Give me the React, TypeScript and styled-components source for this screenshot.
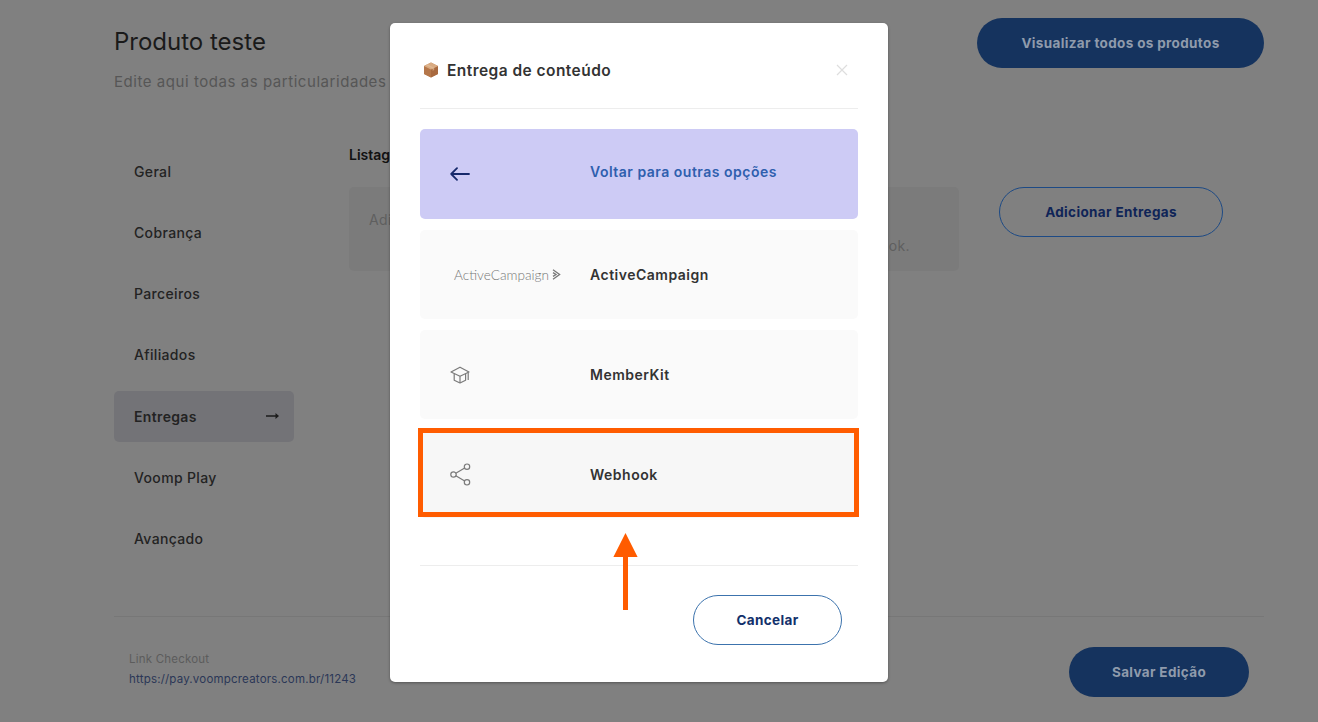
import React from "react";
import styled, { createGlobalStyle } from "styled-components";

const Global = createGlobalStyle`
  html, body { margin: 0; padding: 0; height: 100%; }
  body { font-family: Inter, "Liberation Sans", sans-serif; background: #808080; overflow: hidden; }
  * { box-sizing: border-box; }
`;

const Page = styled.div`
  position: relative;
  width: 1318px;
  height: 722px;
  overflow: hidden;
  background: #808080;
  padding: 18px 54px 0 114px;
`;

const Header = styled.header`
  display: flex;
  justify-content: space-between;
  align-items: flex-start;
  height: 128px;
`;

const TitleBlock = styled.div`
  display: flex;
  flex-direction: column;
  padding-top: 9px;
`;

const Title = styled.h1`
  margin: 0;
  font-size: 24px;
  line-height: 30px;
  font-weight: 400;
  color: #1a1a1a;
`;

const Subtitle = styled.p`
  margin: 15px 0 0;
  font-size: 15px;
  line-height: 20px;
  letter-spacing: 0.55px;
  color: #565656;
  white-space: nowrap;
`;

const SolidButton = styled.button<{ $w: number }>`
  width: ${(p) => p.$w}px;
  height: 50px;
  border: 0;
  border-radius: 25px;
  background: #15335e;
  color: #8f9bac;
  font: 700 13.5px Inter, sans-serif;
  letter-spacing: 0.35px;
`;

const OutlineButton = styled.button<{ $w: number; $color: string; $line: string; $bg: string }>`
  width: ${(p) => p.$w}px;
  height: 50px;
  flex: none;
  border: 1px solid ${(p) => p.$line};
  border-radius: 25px;
  background: ${(p) => p.$bg};
  color: ${(p) => p.$color};
  font: 700 13.5px Inter, sans-serif;
  letter-spacing: 0.35px;
`;

const Content = styled.div`
  display: flex;
  height: 470px;
`;

const Nav = styled.nav`
  width: 180px;
  flex: none;
  display: flex;
  flex-direction: column;
  gap: 10.17px;
`;

const NavItem = styled.div<{ $active?: boolean }>`
  height: 51px;
  display: flex;
  align-items: center;
  justify-content: space-between;
  padding: 0 15px 0 20px;
  border-radius: 5px;
  background: ${(p) => (p.$active ? "#737377" : "transparent")};
  color: #232323;
  font-size: 14px;
  font-weight: ${(p) => (p.$active ? 600 : 500)};
  letter-spacing: 0.35px;
`;

const Main = styled.section`
  margin-left: 55px;
  width: 610px;
  flex: none;
`;

const SectionTitle = styled.h2`
  margin: 0;
  padding-top: 0;
  font-size: 14px;
  line-height: 18px;
  font-weight: 600;
  color: #111;
  white-space: nowrap;
`;

const InfoBox = styled.div`
  margin-top: 23px;
  height: 84px;
  background: #7b7b7b;
  border-radius: 5px;
  padding: 20px 20px;
  font-size: 14px;
  line-height: 26px;
  letter-spacing: 0.4px;
  color: #5f5f5f;
`;

const InfoLine = styled.div<{ $right?: boolean }>`
  text-align: ${(p) => (p.$right ? "right" : "left")};
  padding-right: ${(p) => (p.$right ? "29px" : "0")};
  white-space: nowrap;
`;

const Aside = styled.div`
  margin-left: 40px;
  padding-top: 40.5px;
`;

const Footer = styled.footer`
  border-top: 1px solid #777;
  display: flex;
  justify-content: space-between;
  padding: 30px 15px 0;
`;

const CheckoutInfo = styled.div`
  padding-top: 2px;
  font-size: 11.5px;
  line-height: 20px;
  letter-spacing: 0.2px;
`;

const CheckoutLabel = styled.div`
  color: #5c5c5c;
`;

const CheckoutLink = styled.div`
  color: #2b3757;
`;

const Modal = styled.div`
  position: absolute;
  left: 390px;
  top: 23px;
  width: 498px;
  height: 659px;
  background: #fff;
  border-radius: 5px;
  padding: 0 30px;
  box-shadow: 0 1px 3px rgba(0, 0, 0, 0.35);
`;

const ModalHeader = styled.div`
  height: 86px;
  display: flex;
  align-items: center;
  justify-content: space-between;
  padding: 9px 10px 0 3px;
  border-bottom: 1px solid #ededed;
`;

const ModalTitle = styled.div`
  display: flex;
  align-items: center;
  gap: 8px;
  font-size: 15.5px;
  font-weight: 600;
  letter-spacing: 0.45px;
  color: #333;
`;

const Options = styled.div`
  display: flex;
  flex-direction: column;
  gap: 11px;
  padding-top: 20px;
  height: 457px;
  border-bottom: 1px solid #ededed;
`;

const Option = styled.div<{ $bg: string; $h: number }>`
  height: ${(p) => p.$h}px;
  display: flex;
  align-items: center;
  background: ${(p) => p.$bg};
  border-radius: 5px;
`;

const OptionIcon = styled.div`
  width: 170px;
  flex: none;
  display: flex;
  align-items: center;
  padding-left: 30px;
`;

const LogoText = styled.span`
  font-family: Lato, sans-serif;
  font-weight: 300;
  font-size: 13.6px;
  margin-left: 4px;
  color: #777;
  white-space: nowrap;
`;

const LogoWrap = styled.div`
  display: flex;
  align-items: center;
  gap: 3px;
`;

const OptionLabel = styled.span<{ $color?: string; $up?: boolean }>`
  font-size: 14px;
  font-weight: 600;
  letter-spacing: 0.5px;
  color: ${(p) => p.$color ?? "#333"};
  position: relative;
  top: ${(p) => (p.$up ? "-3px" : "0")};
`;

const ModalFooter = styled.div`
  display: flex;
  justify-content: flex-end;
  padding: 29px 16px 0 0;
`;

const Highlight = styled.div`
  position: absolute;
  left: 28px;
  top: 405px;
  width: 441px;
  height: 89px;
  border: 5px solid #ff5c00;
  pointer-events: none;
`;

const Pointer = styled.svg`
  position: absolute;
  left: 222px;
  top: 508px;
`;

const BoxEmoji = () => (
  <svg width="16" height="16" viewBox="0 0 16 16">
    <path d="M8 .5 15 4v8l-7 3.6L1 12V4z" fill="#c08a5e" />
    <path d="M1 4l7 3.6V15.6L1 12z" fill="#b5774a" />
    <path d="M15 4 8 7.6V15.6L15 12z" fill="#a8693f" />
    <path d="M8 .5 15 4 8 7.6 1 4z" fill="#d9ab82" />
    <path d="M4.2 2.3 11.2 5.8v2.2l-1.6.8V6.6L2.8 3z" fill="#e8c7a3" opacity=".55" />
  </svg>
);

const CloseIcon = () => (
  <svg width="12" height="12" viewBox="0 0 12 12" fill="none" stroke="#dedede" strokeWidth="1.2">
    <path d="M1 1l10 10M11 1 1 11" />
  </svg>
);

const BackArrow = () => (
  <svg width="20" height="14" viewBox="0 0 20 14" fill="none" stroke="#16296b" strokeWidth="1.8" strokeLinecap="round" strokeLinejoin="round">
    <path d="M19 7H1.2M7 1.2 1.2 7 7 12.8" />
  </svg>
);

const NavArrow = () => (
  <svg width="13" height="8" viewBox="0 0 13 8" fill="#1c1c1c">
    <path d="M0 3.3h9.5V1L13 4 9.5 7V4.7H0z" />
  </svg>
);

const ChevronLogo = () => (
  <svg width="9" height="11" viewBox="0 0 9 11" fill="none" stroke="#777" strokeWidth="1.3">
    <path d="M1 .8 7.6 5.5 1 10.2M1 3.6l3 1.9-3 1.9" />
  </svg>
);

const CapIcon = () => (
  <svg width="20" height="18" viewBox="0 0 20 18" fill="none" stroke="#7a7a7a" strokeWidth="1.2" strokeLinejoin="round">
    <path d="M1 6 10 1.2 19 6l-9 4.2z" />
    <path d="M4.2 8v6.2L10 17l5.6-2.8V8" />
    <path d="M10 10.2V17" />
    <path d="M18.2 6.4V14" />
  </svg>
);

const ShareIcon = () => (
  <svg width="21" height="23" viewBox="0 0 21 23" fill="none" stroke="#7a7a7a" strokeWidth="1.2">
    <circle cx="17" cy="3.7" r="2.7" />
    <circle cx="3.5" cy="11.5" r="2.7" />
    <circle cx="17" cy="19.3" r="2.7" />
    <path d="M14.7 5 5.8 10.2M5.8 12.8 14.7 18" />
  </svg>
);

const navItems = ["Geral", "Cobrança", "Parceiros", "Afiliados", "Entregas", "Voomp Play", "Avançado"];

export default function App() {
  return (
    <>
      <Global />
      <Page>
        <Header>
          <TitleBlock>
            <Title>Produto teste</Title>
            <Subtitle>Edite aqui todas as particularidades do seu produto</Subtitle>
          </TitleBlock>
          <SolidButton $w={287}>Visualizar todos os produtos</SolidButton>
        </Header>
        <Content>
          <Nav>
            {navItems.map((n) => (
              <NavItem key={n} $active={n === "Entregas"}>
                {n}
                {n === "Entregas" && <NavArrow />}
              </NavItem>
            ))}
          </Nav>
          <Main>
            <SectionTitle>Listagem de entregas</SectionTitle>
            <InfoBox>
              <InfoLine>Adicione aqui as entregas de conteúdo</InfoLine>
              <InfoLine $right>do seu produto via ActiveCampaign, MemberKit ou Webhook.</InfoLine>
            </InfoBox>
          </Main>
          <Aside>
            <OutlineButton $w={224} $color="#0f2457" $line="#1d4a85" $bg="transparent">
              Adicionar Entregas
            </OutlineButton>
          </Aside>
        </Content>
        <Footer>
          <CheckoutInfo>
            <CheckoutLabel>Link Checkout</CheckoutLabel>
            <CheckoutLink>https://pay.voompcreators.com.br/11243</CheckoutLink>
          </CheckoutInfo>
          <SolidButton $w={180}>Salvar Edição</SolidButton>
        </Footer>

        <Modal>
          <ModalHeader>
            <ModalTitle>
              <BoxEmoji />
              Entrega de conteúdo
            </ModalTitle>
            <CloseIcon />
          </ModalHeader>
          <Options>
            <Option $bg="#cdcbf5" $h={90}>
              <OptionIcon>
                <BackArrow />
              </OptionIcon>
              <OptionLabel $color="#2f5fae" $up>
                Voltar para outras opções
              </OptionLabel>
            </Option>
            <Option $bg="#fafafa" $h={89}>
              <OptionIcon>
                <LogoWrap>
                  <LogoText>ActiveCampaign</LogoText>
                  <ChevronLogo />
                </LogoWrap>
              </OptionIcon>
              <OptionLabel>ActiveCampaign</OptionLabel>
            </Option>
            <Option $bg="#fafafa" $h={89}>
              <OptionIcon>
                <CapIcon />
              </OptionIcon>
              <OptionLabel>MemberKit</OptionLabel>
            </Option>
            <Option $bg="#f7f7f7" $h={88}>
              <OptionIcon>
                <ShareIcon />
              </OptionIcon>
              <OptionLabel>Webhook</OptionLabel>
            </Option>
          </Options>
          <ModalFooter>
            <OutlineButton $w={149} $color="#12306b" $line="#3c73ad" $bg="#fff">
              Cancelar
            </OutlineButton>
          </ModalFooter>
          <Highlight />
          <Pointer width="26" height="80" viewBox="0 0 26 80">
            <path d="M13.5 2 25.6 26H16V79H11V26H1.4z" fill="#ff5c00" />
          </Pointer>
        </Modal>
      </Page>
    </>
  );
}
